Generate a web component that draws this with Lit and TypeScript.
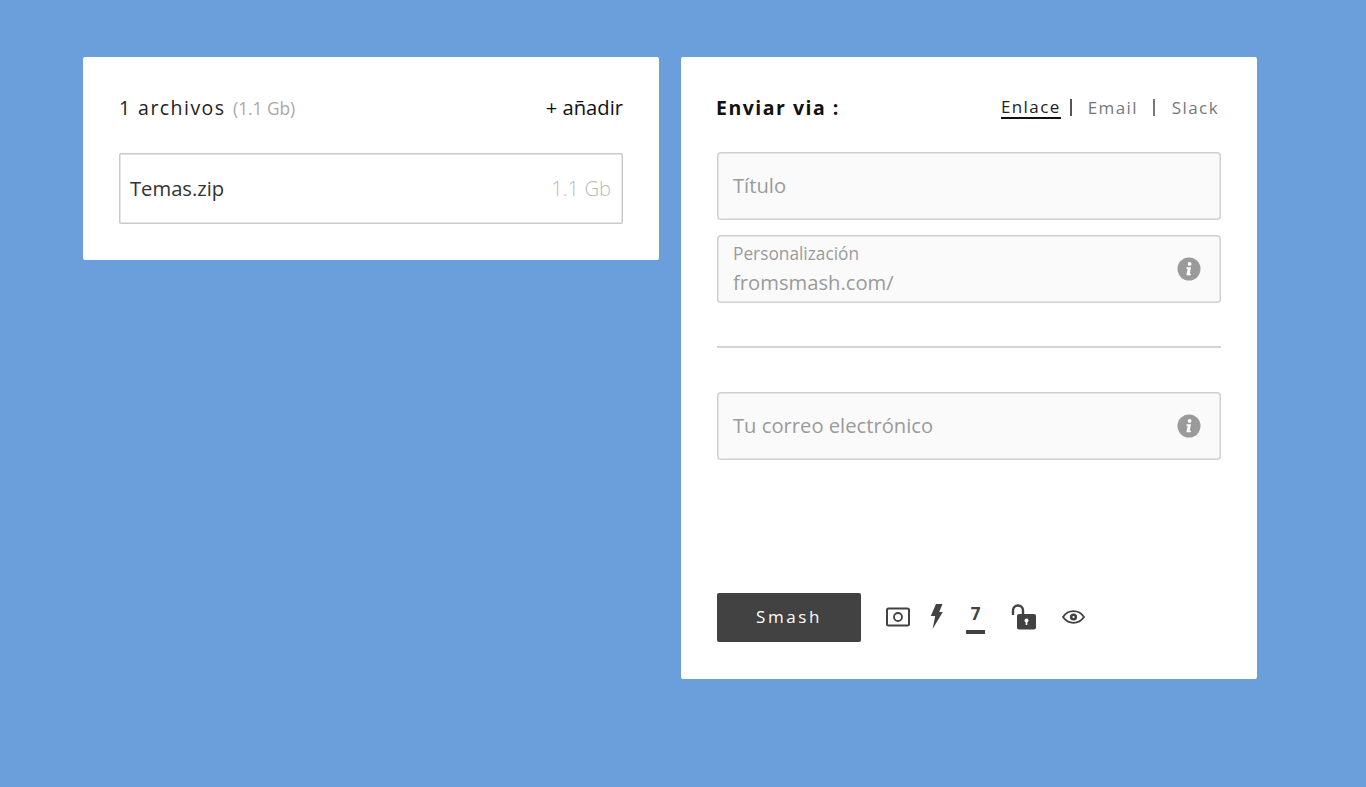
import { LitElement, html, css } from "lit";
import { customElement } from "lit/decorators.js";

@customElement("app-root")
export class AppRoot extends LitElement {
  static styles = css`
    :host {
      display: block;
      width: 1366px;
      height: 787px;
      background: #6b9fdc;
      font-family: "Open Sans", sans-serif;
      overflow: hidden;
    }
    .page {
      display: flex;
      align-items: flex-start;
      gap: 22px;
      padding: 57px 0 0 83px;
    }
    .card {
      background: #fff;
      border-radius: 2px;
      box-sizing: border-box;
      width: 576px;
      padding: 0 36px;
    }
    .left {
      height: 203px;
    }
    .right {
      height: 622px;
      display: flex;
      flex-direction: column;
    }
    .head-left {
      height: 96px;
      display: flex;
      justify-content: space-between;
      align-items: baseline;
      padding-top: 37px;
      box-sizing: border-box;
    }
    .count {
      font-size: 19.5px;
      letter-spacing: 1.45px;
      color: #222;
      line-height: 26px;
    }
    .count small {
      font-size: 17.3px;
      letter-spacing: 0;
      color: #a8a8a8;
      margin-left: 1px;
    }
    .add {
      font-size: 20.2px;
      color: #111;
      line-height: 26px;
    }
    .file {
      height: 71px;
      box-sizing: border-box;
      box-shadow: inset 0 0 0 1.5px #cacaca;
      border-radius: 2px;
      display: flex;
      justify-content: space-between;
      align-items: center;
      padding: 0 12px 2px 11px;
      font-size: 20.2px;
      color: #333;
    }
    .file .size {
      color: #b9b9b9;
      font-weight: 300;
      font-size: 20.2px;
    }
    .head-right {
      height: 95px;
      display: flex;
      justify-content: space-between;
      align-items: center;
      padding-top: 6px;
      box-sizing: border-box;
    }
    .title {
      font-weight: 700;
      font-size: 19.5px;
      letter-spacing: 1.5px;
      color: #111;
      margin-left: -1px;
    }
    .tabs {
      display: flex;
      align-items: center;
      font-size: 17px;
      letter-spacing: 1.4px;
      color: #777;
      padding-right: 2px;
    }
    .tab-active {
      color: #222;
      border-bottom: 2px solid #111;
      line-height: 21px;
    }
    .sep {
      width: 2px;
      height: 17px;
      background: #777;
      margin: 0 17px 0 15px;
    }
    .sep.dark {
      background: #555;
      margin: 0 16px 0 9px;
    }
    .field {
      height: 68px;
      box-sizing: border-box;
      box-shadow: inset 0 0 0 1.5px #d0d0d0;
      border-radius: 4px;
      background: #fafafa;
      display: flex;
      align-items: center;
      justify-content: space-between;
      padding: 0 20px 0 16px;
      color: #9a9a9a;
      font-size: 20.2px;
      flex: none;
    }
    .text {
      margin-top: -2px;
    }
    .stack {
      display: flex;
      flex-direction: column;
    }
    .stack .lbl {
      font-size: 17.3px;
      line-height: 22px;
      color: #9a9a9a;
    }
    .stack .val {
      font-size: 20.2px;
      line-height: 27px;
      margin-top: 4px;
    }
    .gap {
      height: 15px;
      flex: none;
    }
    .rule {
      height: 2px;
      background: #d4d4d4;
      margin: 43px 0 44px;
      flex: none;
    }
    .info {
      width: 24px;
      height: 24px;
      flex: none;
      display: block;
    }
    .actions {
      margin-top: 133px;
      display: flex;
      align-items: center;
    }
    .smash {
      width: 144px;
      height: 49px;
      box-sizing: border-box;
      padding-bottom: 2px;
      background: #424242;
      border-radius: 2px;
      color: #fff;
      font-size: 17px;
      letter-spacing: 2.6px;
      display: flex;
      align-items: center;
      justify-content: center;
      flex: none;
    }
    .icons {
      display: flex;
      align-items: center;
      margin-left: 25px;
      padding-bottom: 2px;
    }
    .icons svg {
      display: block;
      flex: none;
    }
    .bolt {
      margin-left: 20px;
    }
    .eye {
      margin-left: 26px;
    }
    .seven {
      width: 19px;
      margin: 0 26px 0 23px;
      display: flex;
      flex-direction: column;
      align-items: center;
      height: 38px;
      box-sizing: border-box;
      padding-top: 4px;
    }
    .seven span {
      font-size: 17px;
      font-weight: 700;
      line-height: 23px;
      color: #424242;
    }
    .seven i {
      display: block;
      width: 19px;
      height: 4px;
      background: #424242;
      margin-top: 5px;
    }
  `;

  private info() {
    return html`<svg class="info" viewBox="0 0 24 24">
      <circle cx="12" cy="12" r="11.5" fill="#9a9a9a"></circle>
      <circle cx="12.6" cy="6.9" r="1.9" fill="#fff"></circle>
      <path d="M9.6 10.3h4.4l-1.3 6.4h1.4l-.3 1.5H9.4l1.3-6.4H9.3z" fill="#fff"></path>
    </svg>`;
  }

  render() {
    return html`<div class="page">
      <section class="card left">
        <div class="head-left">
          <div class="count">1 archivos <small>(1.1 Gb)</small></div>
          <div class="add">+ añadir</div>
        </div>
        <div class="file"><span>Temas.zip</span><span class="size">1.1 Gb</span></div>
      </section>
      <section class="card right">
        <div class="head-right">
          <div class="title">Enviar via :</div>
          <div class="tabs">
            <span class="tab-active">Enlace</span><span class="sep dark"></span>
            <span>Email</span><span class="sep"></span>
            <span>Slack</span>
          </div>
        </div>
        <div class="field"><span class="text">Título</span></div>
        <div class="gap"></div>
        <div class="field">
          <div class="stack">
            <span class="lbl">Personalización</span>
            <span class="val">fromsmash.com/</span>
          </div>
          ${this.info()}
        </div>
        <div class="rule"></div>
        <div class="field"><span class="text">Tu correo electrónico</span>${this.info()}</div>
        <div class="actions">
          <div class="smash">Smash</div>
          <div class="icons">
            <svg width="24" height="20" viewBox="0 0 24 20">
              <rect x="1" y="1.5" width="22" height="17" rx="1.5" fill="none" stroke="#424242" stroke-width="2"></rect>
              <circle cx="12" cy="10" r="4" fill="none" stroke="#424242" stroke-width="1.8"></circle>
            </svg>
            <svg class="bolt" width="13" height="25" viewBox="0 0 13 25">
              <path d="M6 0h6.5L9.2 8h3.6L2.6 25l2.6-13H.8z" fill="#424242"></path>
            </svg>
            <div class="seven"><span>7</span><i></i></div>
            <svg width="25" height="26" viewBox="0 0 25 26">
              <path d="M2 11V6.5a5 5 0 0 1 10 0V10" fill="none" stroke="#424242" stroke-width="2.4"></path>
              <rect x="6" y="10" width="19" height="15.5" rx="2" fill="#424242"></rect>
              <circle cx="15.5" cy="16.5" r="2" fill="#fff"></circle>
              <rect x="14.7" y="17" width="1.6" height="4" fill="#fff"></rect>
            </svg>
            <svg class="eye" width="23" height="14" viewBox="0 0 23 14">
              <path d="M1 7c2.6-3.8 6-5.8 10.5-5.8S19.4 3.2 22 7c-2.6 3.8-6 5.8-10.5 5.8S3.6 10.8 1 7z" fill="none" stroke="#424242" stroke-width="1.8"></path>
              <circle cx="11.5" cy="7" r="3.6" fill="#424242"></circle>
              <circle cx="11.5" cy="7" r="1.1" fill="#fff"></circle>
            </svg>
          </div>
        </div>
      </section>
    </div>`;
  }
}
